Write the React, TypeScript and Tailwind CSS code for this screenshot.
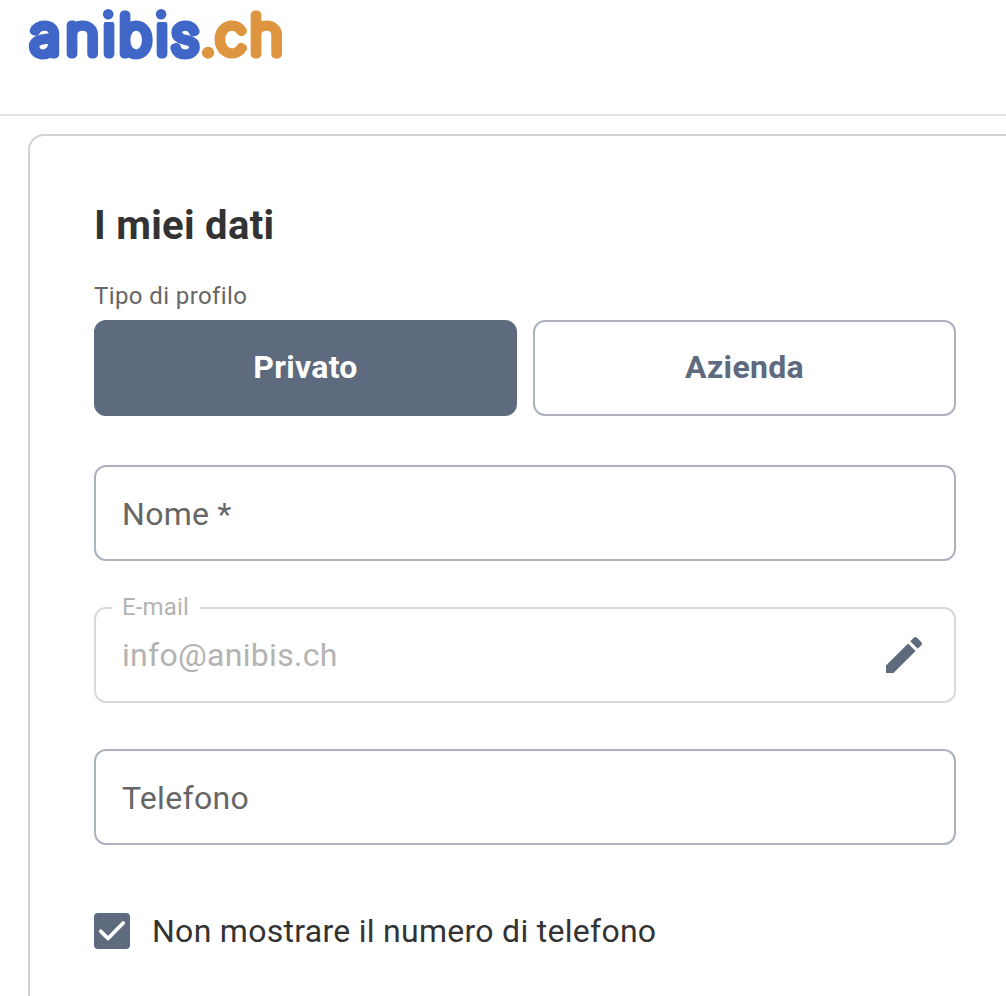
import React, { useState } from 'react';

type ProfileType = 'private' | 'company';

interface TextFieldProps {
  id: string;
  placeholder: string;
}

const Logo: React.FC = () => (
  <svg width="260" height="76" viewBox="26 0 260 76" className="block" aria-label="anibis.ch">
    <g
      fontFamily="Inter, sans-serif"
      fontWeight="100"
      fontSize="52.8"
      strokeWidth="8.9"
      strokeLinejoin="round"
      strokeLinecap="round"
      transform="scale(1.06 1)"
    >
      <text x="28.8 62.2 97.1 112.3 147.1 161.5" y="54.2" fill="#4067c8" stroke="#4067c8">
        anibis
      </text>
      <text x="189.2 203.6 235.8" y="54.2" fill="#de9540" stroke="#de9540">
        .ch
      </text>
    </g>
    {/* round dots with a gap above the stems */}
    <rect x="101" y="4" width="14.5" height="18" fill="#fff" />
    <rect x="154.5" y="4" width="14" height="18" fill="#fff" />
    <circle cx="108.2" cy="14.2" r="5.3" fill="#4067c8" />
    <circle cx="161.1" cy="14.2" r="5.3" fill="#4067c8" />
    <circle cx="208" cy="52.9" r="5.6" fill="#de9540" />
  </svg>
);

const TextField: React.FC<TextFieldProps> = ({ id, placeholder }) => {
  const [value, setValue] = useState('');

  return (
    <input
      id={id}
      type="text"
      value={value}
      onChange={(e) => setValue(e.target.value)}
      className="block w-full h-24 pt-0.5 px-[26px] border-2 border-[#acb3bf] rounded-xl text-[32px] tracking-[0.3px] text-[#333] placeholder:text-[#666] focus:outline-none"
      placeholder={placeholder}
    />
  );
};

const App: React.FC = () => {
  const [profile, setProfile] = useState<ProfileType>('private');
  const [hidePhone, setHidePhone] = useState(true);

  const tabClass = (type: ProfileType) =>
    profile === type
      ? 'bg-[#5e6a7d] border-[#5e6a7d] text-white'
      : 'bg-white border-[#acb3bf] text-[#5e6a7d]';

  return (
    <div className="h-[996px] overflow-hidden bg-white font-[Roboto,sans-serif] text-[#333]">
      <header className="h-29 pl-[26px] border-b-2 border-[#e4e4e4]">
        <Logo />
      </header>

      <main className="w-[994px] h-[900px] ml-7 mt-[18px] px-16 pt-16 border-2 border-[#d2d2d2] rounded-2xl">
        <h1 className="h-[52px] text-[40px] leading-[52px] font-bold tracking-[0.3px]">I miei dati</h1>

        <p className="mt-7 h-8 text-2xl leading-8 tracking-[0.4px] text-[#666]">Tipo di profilo</p>

        <div className="mt-2 grid grid-cols-2 gap-4">
          <button
            type="button"
            onClick={() => setProfile('private')}
            className={`h-24 pb-0.5 border-2 rounded-xl text-[32px] font-bold tracking-[0.3px] ${tabClass('private')}`}
          >
            Privato
          </button>
          <button
            type="button"
            onClick={() => setProfile('company')}
            className={`h-24 pb-0.5 border-2 rounded-xl text-[32px] font-bold tracking-[0.3px] ${tabClass('company')}`}
          >
            Azienda
          </button>
        </div>

        <div className="mt-[49px]">
          <TextField id="name" placeholder="Nome *" />
        </div>

        <fieldset className="mt-[35px] h-[107px] pl-[16px] pr-[26px] border-2 border-[#d9d9d9] rounded-xl text-[#b3b3b3]">
          <legend className="h-6 pl-[10px] pr-[11px] text-2xl leading-[22px] tracking-[0.15px]">E-mail</legend>
          <div className="flex items-center justify-between h-[70px] pl-[10px]">
            <span className="text-[32px] leading-[48px] tracking-[0.3px]">info@anibis.ch</span>
            <button type="button" aria-label="Modifica">
              <svg width="48" height="48" viewBox="0 0 24 24" fill="#5e6a7d">
                <path d="M3 17.25V21h3.75L17.81 9.94l-3.75-3.75L3 17.25zM20.71 7.04a1 1 0 0 0 0-1.41l-2.34-2.34a1 1 0 0 0-1.41 0l-1.83 1.83 3.75 3.75 1.83-1.83z" />
              </svg>
            </button>
          </div>
        </fieldset>

        <div className="mt-[46px]">
          <TextField id="phone" placeholder="Telefono" />
        </div>

        <label className="mt-[62px] h-12 flex items-center cursor-pointer">
          <input
            type="checkbox"
            checked={hidePhone}
            onChange={(e) => setHidePhone(e.target.checked)}
            className="sr-only"
          />
          <span className="w-9 h-9 rounded bg-[#5e6a7d]">
            {hidePhone && (
              <svg width="36" height="36" viewBox="0 0 36 36" fill="none">
                <path
                  d="M6.8 18.3l7.2 7.2L29.2 10"
                  stroke="#fff"
                  strokeWidth="3.8"
                  strokeLinecap="round"
                  strokeLinejoin="round"
                />
              </svg>
            )}
          </span>
          <span className="ml-[22px] text-[32px] leading-[48px] tracking-[0.28px]">
            Non mostrare il numero di telefono
          </span>
        </label>
      </main>
    </div>
  );
};

export default App;
